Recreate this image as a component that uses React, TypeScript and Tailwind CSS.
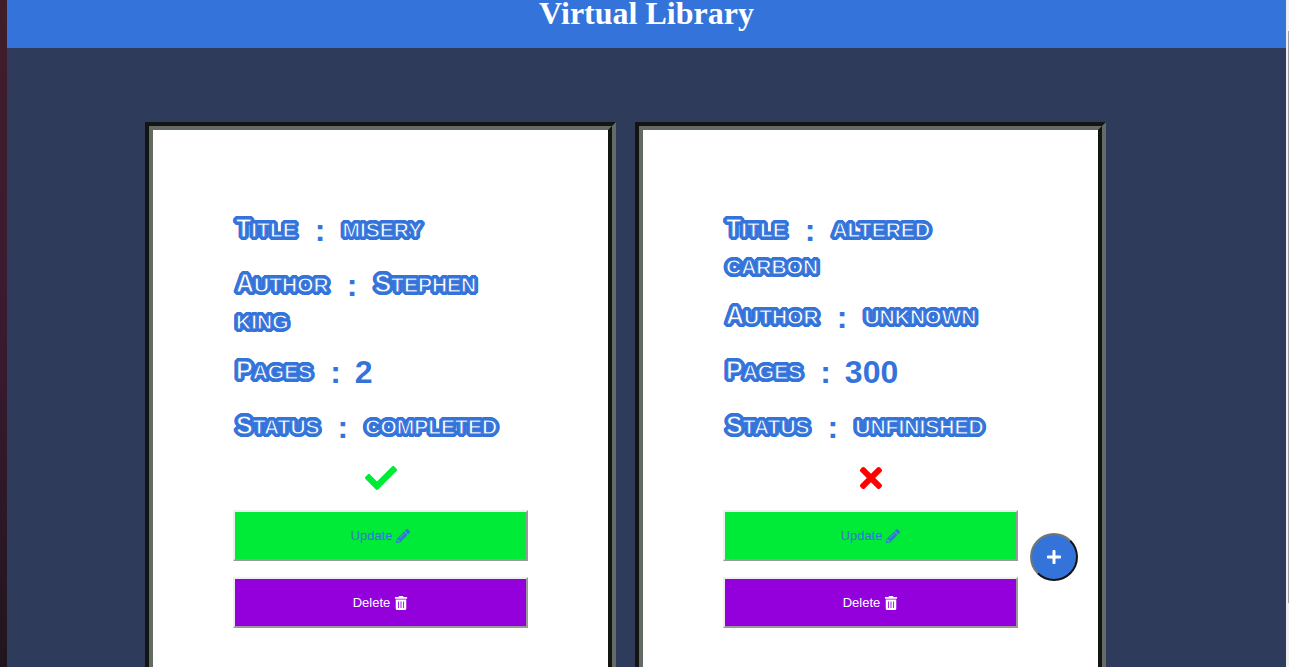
import { FaCheck, FaPencilAlt, FaPlus, FaTimes, FaTrashAlt } from "react-icons/fa";

type Book = {
  title: string;
  author: string;
  pages: number;
  finished: boolean;
};

const books: Book[] = [
  { title: "misery", author: "Stephen king", pages: 2, finished: true },
  { title: "altered carbon", author: "unknown", pages: 300, finished: false },
];

function Outlined({ text }: { text: string }) {
  return (
    <>
      {text.split(" ").map((word, i) => (
        <span key={word}>
          {i > 0 && " "}
          <span
            className={
              "inline-block px-[3px] text-white uppercase [-webkit-text-stroke:1px_#3474da] [text-shadow:3px_0_#3474da,-3px_0_#3474da,0_3px_#3474da,0_-3px_#3474da,2px_2px_#3474da,-2px_2px_#3474da,2px_-2px_#3474da,-2px_-2px_#3474da,3px_1px_#3474da,3px_-1px_#3474da,-3px_1px_#3474da,-3px_-1px_#3474da,1px_3px_#3474da,-1px_3px_#3474da,1px_-3px_#3474da,-1px_-3px_#3474da] " +
              (/^[A-Z]/.test(word) ? "first-letter:text-[25px]" : "")
            }
          >
            {word}
          </span>
        </span>
      ))}
    </>
  );
}

function Field({ label, value }: { label: string; value: string | number }) {
  return (
    <h2 className="mb-4 text-[21px] leading-8 font-bold text-[#3474da]">
      <Outlined text={label} />
      <span className="mr-[14px] ml-[15px] inline-block pb-[5px] align-[-4px] text-[32px] leading-8">:</span>
      {typeof value === "number" ? (
        <span className="inline-block align-[-4px] text-[32px] leading-8">{value}</span>
      ) : (
        <Outlined text={value} />
      )}
    </h2>
  );
}

function BookCard({ book }: { book: Book }) {
  return (
    <article className="w-[471px] border-4 border-t-[#131513] border-r-[#646b65] border-b-[#646b65] border-l-[#131513]">
      <div className="h-full border-4 border-t-[#646b65] border-r-[#131513] border-b-[#131513] border-l-[#646b65] bg-white px-20 pt-[82px] pb-20">
        <Field label="Title" value={book.title} />
        <Field label="Author" value={book.author} />
        <Field label="Pages" value={book.pages} />
        <Field label="Status" value={book.finished ? "completed" : "unfinished"} />
        <div className="-mt-[2px] mb-4 flex justify-center text-[32px]">
          {book.finished ? <FaCheck className="text-[#00eb38]" /> : <FaTimes className="text-[#ff0000]" />}
        </div>
        <div className="flex flex-col gap-4">
          <button className="flex h-[51px] items-center justify-center gap-1 border-2 border-t-[#efefef] border-r-[#999] border-b-[#999] border-l-[#efefef] bg-[#00eb38] text-[13px] text-[#3474da]">
            Update <FaPencilAlt className="text-[14px]" />
          </button>
          <button className="flex h-[51px] items-center justify-center gap-1 border-2 border-t-[#efefef] border-r-[#999] border-b-[#999] border-l-[#efefef] bg-[#9300dc] text-[13px] text-white">
            Delete <FaTrashAlt className="text-[14px]" />
          </button>
        </div>
      </div>
    </article>
  );
}

export default function App() {
  return (
    <div className="flex h-screen overflow-hidden bg-[#2e3b5b] font-['Liberation_Sans',Arial,sans-serif]">
      <div className="w-[7px] shrink-0 bg-linear-to-b from-[#401d29] via-[#391a30] to-[#21151d]" />
      <div className="min-w-0 flex-1">
        <header className="bg-[#3474da] pb-[22px] text-center font-['Liberation_Serif','Times_New_Roman',serif] text-white">
          <h1 className="text-[32px] leading-[26px] font-bold">Virtual Library</h1>
        </header>
        <main className="flex justify-center gap-[19px] pt-[74px] pr-[42px]">
          {books.map((book) => (
            <BookCard key={book.title} book={book} />
          ))}
        </main>
      </div>
      <div className="w-[3px] shrink-0 bg-[#f1f1f1] pt-[31px] pl-[2px]">
        <div className="h-[90%] bg-[#a0a0a0]" />
      </div>
      <button
        aria-label="Add book"
        className="fixed right-[211px] bottom-[86px] flex size-12 items-center justify-center rounded-full border-2 border-t-[#76776f] border-r-[#131313] border-b-[#131313] border-l-[#76776f] bg-[#3474da] text-[16px] text-white"
      >
        <FaPlus />
      </button>
    </div>
  );
}
